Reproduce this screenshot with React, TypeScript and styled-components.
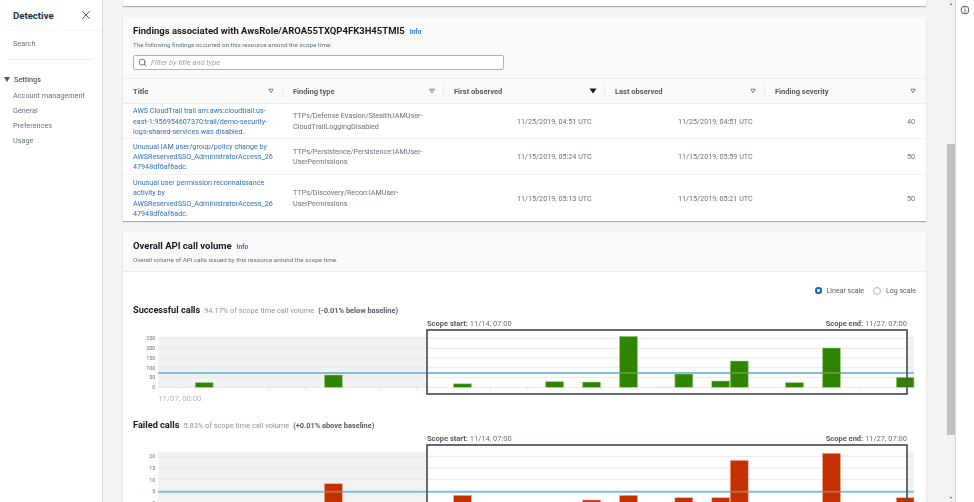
import React from 'react';
import styled, { createGlobalStyle } from 'styled-components';
import { Search, X } from 'lucide-react';

const GlobalStyle = createGlobalStyle`
    html, body {
        margin: 0;
        height: 100%;
        overflow: hidden;
        background: #fff;
    }
    body {
        font-family: Roboto, "Liberation Sans", sans-serif;
        color: #545b64;
    }
`;

const Page = styled.div`
    display: flex;
    width: 974px;
    height: 502px;
    overflow: hidden;
    filter: blur(0.25px);
`;

const Sidebar = styled.nav`
    width: 102px;
    flex: none;
    background: #fff;
    border-right: 1px solid #d5dbdb;
`;

const SideHeader = styled.div`
    height: 30px;
    padding: 0 9px 0 13px;
    display: flex;
    align-items: center;
    justify-content: space-between;
    border-bottom: 1px solid #f4f5f5;
    font-size: 9.6px;
    font-weight: 700;
    color: #232f3e;
`;

const SideLink = styled.a`
    display: block;
    font-size: 7.3px;
    line-height: 15.3px;
    color: #687078;
    padding-left: 13px;
`;

const SideSearch = styled.div`
    padding-top: 5px;
    height: 23px;
`;

const SideDivider = styled.div`
    margin: 0 9px 0 8px;
    border-top: 1px solid #eaeded;
`;

const SettingsRow = styled.div`
    display: flex;
    align-items: center;
    gap: 4px;
    padding: 12px 0 0 4px;
    height: 15px;
    margin-bottom: 0.5px;
    font-size: 7.3px;
    font-weight: 500;
    color: #545b64;
`;

const Caret = styled.span`
    width: 0;
    height: 0;
    border-left: 3px solid transparent;
    border-right: 3px solid transparent;
    border-top: 5px solid #545b64;
`;

const Main = styled.main`
    width: 852px;
    flex: none;
    background: #f2f3f3;
    padding: 0 29px 0 20px;
    box-sizing: border-box;
    position: relative;
    overflow: hidden;
`;

const Scrollbar = styled.div`
    position: absolute;
    top: 0;
    right: 0;
    bottom: 0;
    width: 8px;
    background: #f1f1f1;
`;

const ScrollThumb = styled.div`
    position: absolute;
    top: 144px;
    left: 0;
    right: 0;
    height: 291px;
    background: #c1c1c1;
`;

const ScrollArrow = styled.span<{ $down?: boolean }>`
    position: absolute;
    left: 2.5px;
    ${p => (p.$down ? 'bottom: 3px;' : 'top: 3px;')}
    width: 0;
    height: 0;
    border-left: 1.5px solid transparent;
    border-right: 1.5px solid transparent;
    ${p => (p.$down ? 'border-top: 2px solid #505050;' : 'border-bottom: 2px solid #505050;')}
`;

const Rail = styled.aside`
    flex: 1;
    border-left: 1px solid #d5dbdb;
    display: flex;
    justify-content: center;
    padding-top: 5px;
    background: #fff;
`;

const Card = styled.section`
    background: #fff;
    box-shadow: 0 1px 1px rgba(0, 28, 36, 0.3);
`;

const StubCard = styled(Card)`
    height: 6px;
    margin-bottom: 11px;
`;

const TableCard = styled(Card)`
    margin-bottom: 11px;
`;

const CardHeader = styled.header<{ $height: number }>`
    height: ${p => p.$height}px;
    background: #fafafa;
    border-bottom: 1px solid #eaeded;
    padding: 7px 10px 0;
    box-sizing: border-box;
`;

const TitleRow = styled.div`
    display: flex;
    align-items: baseline;
    gap: 5px;
    height: 13px;
`;

const CardTitle = styled.h2`
    margin: 0;
    font-size: 9.5px;
    line-height: 13px;
    font-weight: 700;
    color: #16191f;
`;

const Info = styled.a`
    font-size: 6.6px;
    font-weight: 700;
    color: #2f7cc4;
`;

const Description = styled.p`
    margin: 4px 0 0;
    font-size: 6.25px;
    line-height: 9px;
    color: #687078;
`;

const FilterBox = styled.div`
    margin-top: 5px;
    width: 371px;
    height: 15px;
    box-sizing: border-box;
    background: #fff;
    border: 1px solid #aab7b8;
    border-radius: 2px;
    display: flex;
    align-items: center;
    gap: 4px;
    padding-left: 4px;
    font-size: 7.5px;
    font-style: italic;
    color: #95a5a6;
`;

const Table = styled.div`
    font-size: 7.2px;
`;

const Columns = styled.div`
    display: grid;
    grid-template-columns: 160px 161px 161px 160px 160px;
`;

const HeadRow = styled(Columns)`
    height: 25px;
    background: #fafafa;
    border-bottom: 1px solid #eaeded;
    box-sizing: border-box;
`;

const HeadCell = styled.div<{ $last?: boolean }>`
    display: flex;
    align-items: center;
    justify-content: space-between;
    padding: 0 8px 0 10px;
    font-weight: 700;
    font-size: 7.5px;
    color: #545b64;
    position: relative;
    &::after {
        content: '';
        display: ${p => (p.$last ? 'none' : 'block')};
        position: absolute;
        right: 0;
        top: 5px;
        height: 14px;
        border-right: 1px solid #eaeded;
    }
`;

const Row = styled(Columns)<{ $height: number }>`
    height: ${p => p.$height}px;
    padding-top: 1.5px;
    align-items: center;
    border-bottom: 1px solid #f2f3f3;
    box-sizing: border-box;
    &:last-child {
        border-bottom: 0;
    }
`;

const Cell = styled.div<{ $right?: boolean; $indent?: number }>`
    padding: 0 10px 0 ${p => p.$indent ?? 10}px;
    line-height: 10.3px;
    white-space: nowrap;
    text-align: ${p => (p.$right ? 'right' : 'left')};
    color: #687078;
`;

const TitleLink = styled.a`
    color: #2f6fb7;
    display: block;
    line-height: 10.3px;
`;

const VolumeBody = styled.div`
    padding: 12px 10px 0;
    height: 240px;
`;

const ScaleRow = styled.div`
    display: flex;
    justify-content: flex-end;
    align-items: center;
    gap: 9px;
    height: 13px;
`;

const ScaleOption = styled.label`
    display: flex;
    align-items: center;
    gap: 5px;
    font-size: 7px;
    color: #545b64;
`;

const Radio = styled.span<{ $on?: boolean }>`
    width: ${p => (p.$on ? '2.5px' : '6px')};
    height: ${p => (p.$on ? '2.5px' : '6px')};
    border-radius: 50%;
    border: ${p => (p.$on ? '2.5px solid #0a6cc0' : '0.6px solid #aab7b8')};
    background: #fff;
    display: block;
`;

const CallsHeading = styled.div<{ $top: number }>`
    display: flex;
    align-items: baseline;
    gap: 4px;
    height: 14px;
    line-height: 14px;
    margin-top: ${p => p.$top}px;
    margin-bottom: 2px;
    font-size: 7.4px;
    color: #879596;
`;

const CallsName = styled.span`
    font-size: 9.2px;
    font-weight: 700;
    color: #16191f;
`;

const Strong = styled.strong`
    color: #545b64;
    font-weight: 700;
`;

const ScopeLabels = styled.div`
    display: flex;
    justify-content: space-between;
    margin-left: 294px;
    width: 480px;
    font-size: 7.5px;
    line-height: 10px;
    color: #687078;
    b {
        color: #545b64;
    }
`;

const ChartSvg = styled.svg`
    display: block;
    margin-left: -10px;
    font-family: Roboto, "Liberation Sans", sans-serif;
`;

const SLOT = 18.45;
const X0 = 35.3;
const PLOT_END = 791;

type Bar = { k: number; h: number };

const okBars: Bar[] = [
    { k: 2, h: 4.7 }, { k: 9, h: 12.3 }, { k: 16, h: 3.5 }, { k: 21, h: 5.7 },
    { k: 23, h: 5.3 }, { k: 25, h: 51 }, { k: 27, h: 0.6 }, { k: 28, h: 13.3 }, { k: 30, h: 6.3 },
    { k: 31, h: 26.3 }, { k: 34, h: 4.7 }, { k: 36, h: 39.3 }, { k: 40, h: 10 },
];

const failBars: Bar[] = [
    { k: 9, h: 19.3 }, { k: 16, h: 7.7 }, { k: 23, h: 3 }, { k: 25, h: 7.7 },
    { k: 28, h: 5.3 }, { k: 30, h: 5.3 }, { k: 31, h: 42.7 }, { k: 36, h: 49.7 },
    { k: 40, h: 5.3 },
];

type ChartProps = {
    bars: Bar[];
    fill: string;
    edge: string;
    cross: string;
    grid: { label: string; y: number }[];
    zero: number;
    baseline: number;
    svgHeight: number;
    plotTop: number;
    boxBottom: number;
    startLabel?: string;
};

const Chart = ({ bars, fill, edge, cross, grid, zero, baseline, svgHeight, plotTop, boxBottom, startLabel }: ChartProps) => (
    <ChartSvg width={802} height={svgHeight} viewBox={`0 0 802 ${svgHeight}`}>
        <rect x={X0} y={plotTop} width={304 - X0} height={zero - plotTop} fill="#f2f2f2" />
        <rect x={784} y={plotTop} width={PLOT_END - 784} height={zero - plotTop} fill="#f2f2f2" />
        {grid.map(g => (
            <g key={g.label}>
                <line x1={X0} x2={PLOT_END} y1={g.y} y2={g.y} stroke="#e9e9e9" strokeWidth={1} />
                <text x={X0 - 3} y={g.y + 1.8} fontSize={5.4} textAnchor="end" fill="#687078">{g.label}</text>
            </g>
        ))}
        {Array.from({ length: 21 }, (_, i) => (
            <line key={i} x1={X0 + i * SLOT * 2} x2={X0 + i * SLOT * 2} y1={zero} y2={zero + 3} stroke="#d5dbdb" strokeWidth={0.7} />
        ))}
        <line x1={X0} x2={PLOT_END} y1={baseline} y2={baseline} stroke="#7fbfdd" strokeWidth={2} />
        {bars.map(b => {
            const x = X0 + b.k * SLOT;
            const w = Math.min(SLOT - 0.5, PLOT_END - x);
            return (
                <g key={b.k} opacity={b.h < 1 ? 0.2 : 1}>
                    <rect x={x} y={zero - b.h} width={w} height={b.h} fill={fill} stroke={edge} strokeWidth={0.6} />
                    {zero - b.h < baseline && (
                        <rect x={x} y={baseline - 1} width={w} height={2} fill={cross} />
                    )}
                </g>
            );
        })}
        <rect x={304} y={1} width={480} height={boxBottom - 1} fill="none" stroke="#545b64" strokeWidth={1.8} />
        {startLabel && (
            <text x={X0} y={zero + 14} fontSize={7.7} fill="#aab7b8">{startLabel}</text>
        )}
    </ChartSvg>
);

const findings = [
    {
        title: ['AWS CloudTrail trail arn:aws:cloudtrail:us-', 'east-1:956954607370:trail/demo-security-', 'logs-shared-services was disabled.'],
        type: ['TTPs/Defense Evasion/Stealth:IAMUser-', 'CloudTrailLoggingDisabled'],
        first: '11/25/2019, 04:51 UTC',
        last: '11/25/2019, 04:51 UTC',
        severity: 40,
        height: 35,
    },
    {
        title: ['Unusual IAM user/group/policy change by', 'AWSReservedSSO_AdministratorAccess_26', '47948df6af6adc.'],
        type: ['TTPs/Persistence/Persistence:IAMUser-', 'UserPermissions'],
        first: '11/15/2019, 05:24 UTC',
        last: '11/15/2019, 05:59 UTC',
        severity: 50,
        height: 36,
    },
    {
        title: ['Unusual user permission reconnaissance', 'activity by', 'AWSReservedSSO_AdministratorAccess_26', '47948df6af6adc.'],
        type: ['TTPs/Discovery/Recon:IAMUser-', 'UserPermissions'],
        first: '11/15/2019, 05:13 UTC',
        last: '11/15/2019, 05:21 UTC',
        severity: 50,
        height: 46,
    },
];

const SortIcon = ({ active }: { active?: boolean }) => (
    <svg width="8" height="6" viewBox="0 0 8 6">
        {active
            ? <path d="M0.5 0.5h7L4 5.5z" fill="#16191f" />
            : <path d="M1.6 1.2h4.8L4 4.8z" fill="#e4e7e7" stroke="#687078" strokeWidth="0.8" />}
    </svg>
);

const Lines = ({ lines }: { lines: string[] }) => (
    <>
        {lines.map(l => <div key={l}>{l}</div>)}
    </>
);

const App = () => (
    <Page>
        <GlobalStyle />
        <Sidebar>
            <SideHeader>
                Detective
                <X size={14} color="#545b64" strokeWidth={1.7} />
            </SideHeader>
            <SideSearch><SideLink>Search</SideLink></SideSearch>
            <SideDivider />
            <SettingsRow><Caret />Settings</SettingsRow>
            <SideLink>Account management</SideLink>
            <SideLink>General</SideLink>
            <SideLink>Preferences</SideLink>
            <SideLink>Usage</SideLink>
        </Sidebar>
        <Main>
            <StubCard />
            <TableCard>
                <CardHeader $height={62}>
                    <TitleRow>
                        <CardTitle>Findings associated with AwsRole/AROA55TXQP4FK3H45TMI5</CardTitle>
                        <Info>Info</Info>
                    </TitleRow>
                    <Description>The following findings occurred on this resource around the scope time.</Description>
                    <FilterBox>
                        <Search size={9} color="#545b64" strokeWidth={2.2} />
                        Filter by title and type
                    </FilterBox>
                </CardHeader>
                <Table>
                    <HeadRow>
                        <HeadCell>Title<SortIcon /></HeadCell>
                        <HeadCell>Finding type<SortIcon /></HeadCell>
                        <HeadCell>First observed<SortIcon active /></HeadCell>
                        <HeadCell>Last observed<SortIcon /></HeadCell>
                        <HeadCell $last>Finding severity<SortIcon /></HeadCell>
                    </HeadRow>
                    {findings.map(f => (
                        <Row key={f.first} $height={f.height}>
                            <Cell><TitleLink><Lines lines={f.title} /></TitleLink></Cell>
                            <Cell><Lines lines={f.type} /></Cell>
                            <Cell $indent={73}>{f.first}</Cell>
                            <Cell $indent={73}>{f.last}</Cell>
                            <Cell $right>{f.severity}</Cell>
                        </Row>
                    ))}
                </Table>
            </TableCard>
            <Card>
                <CardHeader $height={40}>
                    <TitleRow>
                        <CardTitle>Overall API call volume</CardTitle>
                        <Info>Info</Info>
                    </TitleRow>
                    <Description>Overall volume of API calls issued by this resource around the scope time.</Description>
                </CardHeader>
                <VolumeBody>
                    <ScaleRow>
                        <ScaleOption><Radio $on />Linear scale</ScaleOption>
                        <ScaleOption><Radio />Log scale</ScaleOption>
                    </ScaleRow>
                    <CallsHeading $top={6}>
                        <CallsName>Successful calls</CallsName>
                        94.17% of scope time call volume <Strong>(-0.01% below baseline)</Strong>
                    </CallsHeading>
                    <ScopeLabels>
                        <span><b>Scope start:</b> 11/14, 07:00</span>
                        <span><b>Scope end:</b> 11/27, 07:00</span>
                    </ScopeLabels>
                    <Chart
                        bars={okBars}
                        fill="#2f8400"
                        edge="#a9d08e"
                        cross="#5a9838"
                        grid={[
                            { label: '250', y: 9.3 }, { label: '200', y: 19.3 }, { label: '150', y: 29 },
                            { label: '100', y: 38.7 }, { label: '50', y: 48.3 }, { label: '0', y: 58.3 },
                        ]}
                        zero={58.3}
                        baseline={44}
                        svgHeight={89}
                        plotTop={7.5}
                        boxBottom={65}
                        startLabel="11/07, 00:00"
                    />
                    <CallsHeading $top={0}>
                        <CallsName>Failed calls</CallsName>
                        5.83% of scope time call volume <Strong>(+0.01% above baseline)</Strong>
                    </CallsHeading>
                    <ScopeLabels>
                        <span><b>Scope start:</b> 11/14, 07:00</span>
                        <span><b>Scope end:</b> 11/27, 07:00</span>
                    </ScopeLabels>
                    <Chart
                        bars={failBars}
                        fill="#c53000"
                        edge="#eeb09c"
                        cross="#c9694a"
                        grid={[
                            { label: '20', y: 12.3 }, { label: '15', y: 24 }, { label: '10', y: 35.7 },
                            { label: '5', y: 47.3 }, { label: '0', y: 59 },
                        ]}
                        zero={59}
                        baseline={47.7}
                        svgHeight={70}
                        plotTop={7.7}
                        boxBottom={90}
                    />
                </VolumeBody>
            </Card>
            <Scrollbar>
                <ScrollArrow />
                <ScrollThumb />
                <ScrollArrow $down />
            </Scrollbar>
        </Main>
        <Rail>
            <svg width="10" height="10" viewBox="0 0 10 10">
                <circle cx="5" cy="5" r="3.9" fill="none" stroke="#545b64" strokeWidth="1" />
                <path d="M5 2.3v1.1M5 4.2v3.4" stroke="#545b64" strokeWidth="1" />
            </svg>
        </Rail>
    </Page>
);

export default App;
